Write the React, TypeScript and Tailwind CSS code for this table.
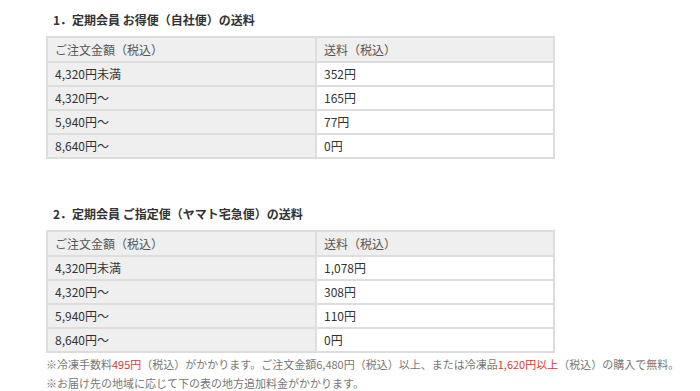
import React from "react";

type Row = [string, string];

const TABLES: { title: string; rows: Row[] }[] = [
  {
    title: "1．定期会員 お得便（自社便）の送料",
    rows: [
      ["4,320円未満", "352円"],
      ["4,320円～", "165円"],
      ["5,940円～", "77円"],
      ["8,640円～", "0円"],
    ],
  },
  {
    title: "2．定期会員 ご指定便（ヤマト宅急便）の送料",
    rows: [
      ["4,320円未満", "1,078円"],
      ["4,320円～", "308円"],
      ["5,940円～", "110円"],
      ["8,640円～", "0円"],
    ],
  },
];

function FeeTable({ title, rows }: { title: string; rows: Row[] }) {
  return (
    <div>
      <h3 className="pl-[7px] text-[12px] font-bold leading-[16px] text-[#333]">{title}</h3>
      <table className="mt-[8px] w-[509px] border-collapse text-[12px] text-[#333]">
        <thead>
          <tr className="h-[25px] bg-[#efefef] text-[#555]">
            <th className="w-[269px] border-2 border-[#dddddd] px-[7px] text-left font-normal">ご注文金額（税込）</th>
            <th className="border-2 border-[#dddddd] px-[7px] text-left font-normal">送料（税込）</th>
          </tr>
        </thead>
        <tbody>
          {rows.map(([amount, fee]) => (
            <tr key={amount} className="h-[24px]">
              <td className="border-2 border-[#dddddd] bg-[#efefef] px-[7px]">{amount}</td>
              <td className="border-2 border-[#dddddd] bg-white px-[7px]">{fee}</td>
            </tr>
          ))}
        </tbody>
      </table>
    </div>
  );
}

export default function App() {
  return (
    <div
      className="h-[391px] w-[700px] overflow-hidden bg-white pl-[46px] pt-[12px]"
      style={{ fontFamily: '"Noto Sans CJK JP", "Noto Sans", sans-serif' }}
    >
      <FeeTable {...TABLES[0]} />
      <div className="mt-[47px]">
        <FeeTable {...TABLES[1]} />
      </div>
      <div className="mt-[2px] whitespace-nowrap text-[11px] leading-[19px] text-[#777]">
        <p>
          ※冷凍手数料<span className="text-[#e8342e]">495円</span>（税込）がかかります。ご注文金額6,480円（税込）以上、または冷凍品
          <span className="text-[#e8342e]">1,620円以上</span>（税込）の購入で無料。
        </p>
        <p>※お届け先の地域に応じて下の表の地方追加料金がかかります。</p>
      </div>
    </div>
  );
}
